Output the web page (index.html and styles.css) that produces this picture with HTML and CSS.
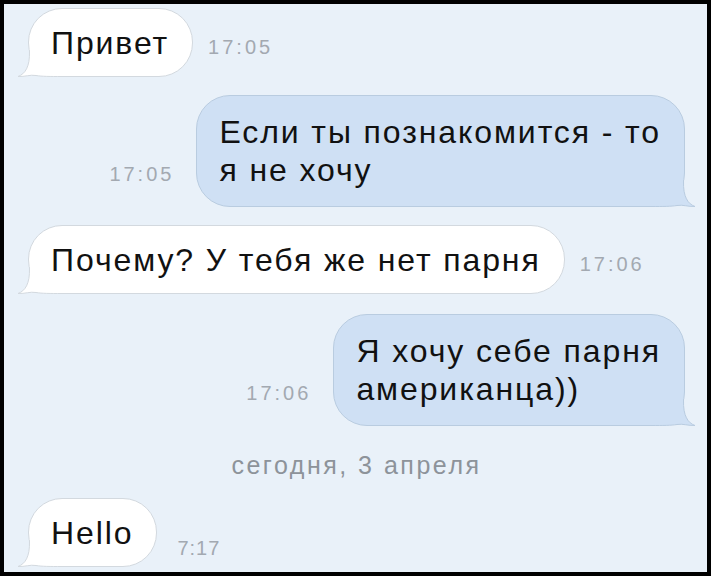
FILE: index.html
```html
<!DOCTYPE html>
<html lang="ru">
<head>
    <meta charset="UTF-8">
    <meta name="viewport" content="width=device-width, initial-scale=1.0">
    <title>Сообщения</title>
    <link rel="stylesheet" href="styles.css">
</head>
<body>
    <div class="screen">
        <div class="chat">
            <div class="row in">
                <div class="bubble">
                    <svg class="tail" width="50" height="32" viewBox="0 0 50 32"><path class="tail-fill" d="M13.5 6C14 22 9 29 2 31.5C9 31.8 14 29.5 20 30.5C26 31.5 34 31.5 46 31.5L46 6Z"/><path class="tail-line" d="M13.5 6C14 22 9 29 2 31.5C9 31.8 14 29.5 20 30.5C26 31.5 34 31.5 46 31.5"/></svg>
                    <span class="text">Привет</span>
                </div>
                <span class="time">17:05</span>
            </div>

            <div class="row out">
                <span class="time">17:05</span>
                <div class="bubble multi">
                    <svg class="tail" width="50" height="32" viewBox="0 0 50 32"><path class="tail-fill" d="M13.5 6C14 22 9 29 2 31.5C9 31.8 14 29.5 20 30.5C26 31.5 34 31.5 46 31.5L46 6Z"/><path class="tail-line" d="M13.5 6C14 22 9 29 2 31.5C9 31.8 14 29.5 20 30.5C26 31.5 34 31.5 46 31.5"/></svg>
                    <span class="text">Если ты познакомится - то<br>я не хочу</span>
                </div>
            </div>

            <div class="row in">
                <div class="bubble">
                    <svg class="tail" width="50" height="32" viewBox="0 0 50 32"><path class="tail-fill" d="M13.5 6C14 22 9 29 2 31.5C9 31.8 14 29.5 20 30.5C26 31.5 34 31.5 46 31.5L46 6Z"/><path class="tail-line" d="M13.5 6C14 22 9 29 2 31.5C9 31.8 14 29.5 20 30.5C26 31.5 34 31.5 46 31.5"/></svg>
                    <span class="text">Почему? У тебя же нет парня</span>
                </div>
                <span class="time">17:06</span>
            </div>

            <div class="row out spaced">
                <span class="time">17:06</span>
                <div class="bubble multi">
                    <svg class="tail" width="50" height="32" viewBox="0 0 50 32"><path class="tail-fill" d="M13.5 6C14 22 9 29 2 31.5C9 31.8 14 29.5 20 30.5C26 31.5 34 31.5 46 31.5L46 6Z"/><path class="tail-line" d="M13.5 6C14 22 9 29 2 31.5C9 31.8 14 29.5 20 30.5C26 31.5 34 31.5 46 31.5"/></svg>
                    <span class="text">Я хочу себе парня<br>американца))</span>
                </div>
            </div>

            <div class="date">сегодня, 3 апреля</div>

            <div class="row in late">
                <div class="bubble">
                    <svg class="tail" width="50" height="32" viewBox="0 0 50 32"><path class="tail-fill" d="M13.5 6C14 22 9 29 2 31.5C9 31.8 14 29.5 20 30.5C26 31.5 34 31.5 46 31.5L46 6Z"/><path class="tail-line" d="M13.5 6C14 22 9 29 2 31.5C9 31.8 14 29.5 20 30.5C26 31.5 34 31.5 46 31.5"/></svg>
                    <span class="text">Hello</span>
                </div>
                <span class="time">7:17</span>
            </div>
        </div>
    </div>
</body>
</html>
```

FILE: styles.css
```css
body {
    margin: 0;
    font-family: "Liberation Sans", Arial, sans-serif;
}
.screen {
    width: 711px;
    height: 576px;
    box-sizing: border-box;
    border: 4px solid #000;
    background-color: #e9f1f9;
    overflow: hidden;
}
.chat {
    display: flex;
    flex-direction: column;
    gap: 18px;
    padding: 4px 22px 0 24px;
}
.row {
    display: flex;
    align-items: last baseline;
}
.row.in {
    justify-content: flex-start;
}
.row.out {
    justify-content: flex-end;
}
.row.spaced {
    margin-top: 2px;
}
.row.late {
    align-items: flex-end;
}
.bubble {
    position: relative;
    background-color: #fff;
    border: 1px solid #d3d9df;
    border-radius: 34px;
    padding: 15px 23px 14px 22px;
    font-size: 32px;
    line-height: 38px;
    letter-spacing: 1.9px;
    color: #111;
    white-space: nowrap;
}
.bubble.multi {
    padding-top: 17px;
    padding-bottom: 17px;
}
.out .bubble {
    background-color: #cfe0f4;
    border-color: #b9cce0;
}
.text {
    position: relative;
}
.tail {
    position: absolute;
    left: -13px;
    bottom: -1px;
}
.tail-fill {
    fill: #fff;
}
.tail-line {
    fill: none;
    stroke: #d3d9df;
    stroke-width: 1;
}
.out .tail {
    left: auto;
    right: -13px;
    transform: scaleX(-1);
}
.out .tail-fill {
    fill: #cfe0f4;
}
.out .tail-line {
    stroke: #b9cce0;
}
.time {
    font-size: 20px;
    line-height: 22px;
    letter-spacing: 3px;
    color: #a3a9b1;
}
.row.in .time {
    margin-left: 15px;
}
.row.out .time {
    margin-right: 22px;
}
.row.late .time {
    margin-left: 20px;
    margin-bottom: 8px;
    letter-spacing: 1px;
}
.date {
    align-self: center;
    margin-top: 6px;
    font-size: 25px;
    line-height: 30px;
    letter-spacing: 2.5px;
    color: #8d939a;
}
```
